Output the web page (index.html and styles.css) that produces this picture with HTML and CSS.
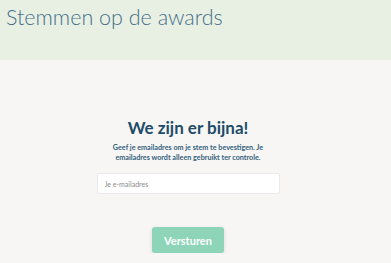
FILE: index.html
```html
<!DOCTYPE html>
<html>
    <head>
        <link rel="stylesheet" href="styles.css">
        <title>Stemmen op de awards</title>
    </head>

    <body>
        <div class="page-header">
            <h1 class="page-title">Stemmen op de awards</h1>
        </div>

        <div class="confirm-box">
            <h2 class="confirm-title">We zijn er bijna!</h2>
            <p class="confirm-text">Geef je emailadres om je stem te bevestigen. Je emailadres wordt alleen gebruikt ter controle.</p>
            <input type="email" class="email-input" placeholder="Je e-mailadres">
            <button class="send-button">Versturen</button>
        </div>
    </body>
</html>
```

FILE: styles.css
```css
body {
    margin: 0;
    background-color: #f7f6f4;
    font-family: Lato, "Noto Sans", sans-serif;
}

.page-header {
    height: 60px;
    background-color: #e8efe3;
    padding: 4px 0 0 6px;
    box-sizing: border-box;
}

.page-title {
    margin: 0;
    font-size: 21.5px;
    font-weight: 300;
    color: #46708a;
    line-height: 26px;
}

.confirm-box {
    display: flex;
    flex-direction: column;
    align-items: center;
    padding: 58px 15px 0 0;
}

.confirm-title {
    margin: 0;
    font-size: 17px;
    font-weight: 700;
    color: #1e4c69;
    line-height: 20px;
}

.confirm-text {
    margin: 5px 0 0;
    width: 170px;
    text-align: center;
    font-size: 7.2px;
    font-weight: 700;
    line-height: 10px;
    color: #33617c;
}

.email-input {
    margin-top: 10px;
    width: 183px;
    height: 21px;
    box-sizing: border-box;
    border: 1px solid #ebe9ec;
    border-radius: 2px;
    background: #fff;
    padding: 0 7px;
    font-family: inherit;
    font-size: 7px;
    outline: none;
}

.email-input::placeholder {
    color: #8a8a8a;
}

.send-button {
    margin-top: 33px;
    width: 72px;
    height: 26px;
    border: none;
    border-radius: 3px;
    background-color: #8dd4b8;
    color: #fff;
    font-family: inherit;
    font-size: 11px;
    font-weight: 700;
    box-shadow: 0 2px 4px rgba(0, 0, 0, 0.12);
}
```
